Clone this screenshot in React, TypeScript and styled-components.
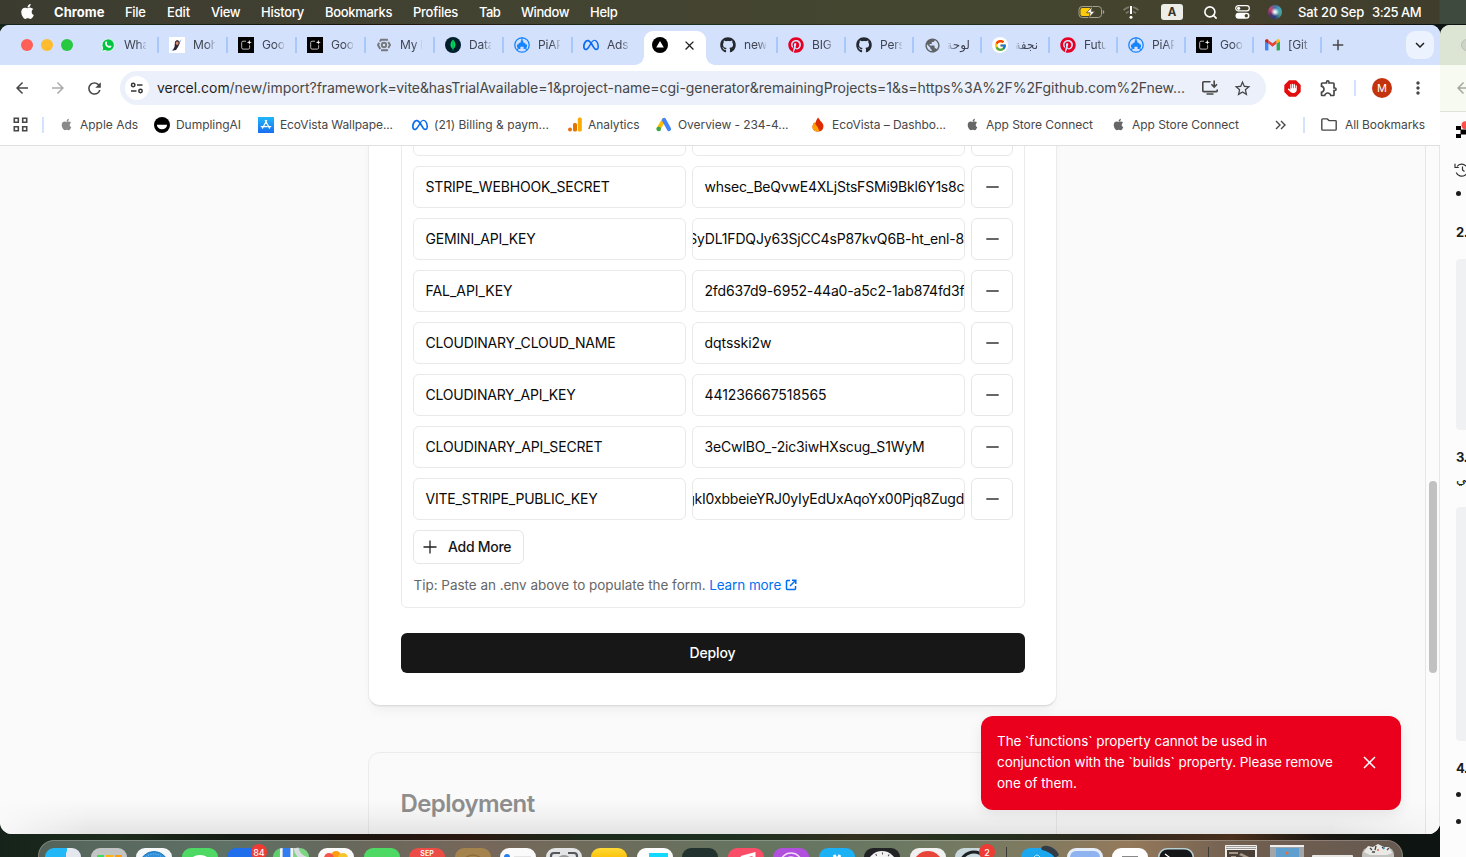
import React from 'react';
import styled, { createGlobalStyle, css } from 'styled-components';
import { FaApple, FaGithub, FaPinterest, FaHand, FaMeta } from 'react-icons/fa6';
import { FcGoogle } from 'react-icons/fc';
import {
  MdArrowBack, MdArrowForward, MdRefresh, MdStarOutline, MdOutlineExtension, MdMoreVert,
  MdPublic, MdKeyboardArrowDown, MdClose, MdAdd,
} from 'react-icons/md';
import { Search } from 'lucide-react';

const Global = createGlobalStyle`
  * { box-sizing: border-box; }
  body { margin: 0; overflow: hidden; font-family: Inter, "DejaVu Sans", sans-serif; }
  svg { display: block; flex: none; }
`;

const Desktop = styled.div`
  position: relative;
  width: 1466px;
  height: 857px;
  overflow: hidden;
  background: linear-gradient(90deg, #16231a 0%, #1d2c1c 8%, #141b14 16%, #1b130e 24%, #2a1810 32%, #1b2a1b 40%, #1d3020 50%, #33301f 58%, #23301e 66%, #2c261c 76%, #4a2f1c 84%, #1b1712 90%, #0e1411 96%);
`;

/* ---------- menu bar ---------- */
const MenuBar = styled.div`
  display: flex;
  align-items: center;
  height: 24px;
  padding: 0 45px 0 19px;
  color: #fff;
  background: linear-gradient(90deg, #3c3b30 0, #434332 500px, #45462f 1000px, #403d2c 1439px, #3d4a3d 1440px);
`;
const AppleMenu = styled.span`
  display: flex;
  flex: none;
  width: 35px;
  padding-bottom: 1px;
`;
const MenuItem = styled.span<{ $w: number; $ls: number; $bold?: boolean }>`
  flex: none;
  width: ${p => p.$w}px;
  padding-bottom: 1px;
  font-size: 13px;
  font-weight: ${p => (p.$bold ? 700 : 500)};
  letter-spacing: ${p => p.$ls}px;
  white-space: nowrap;
`;
const Status = styled.div`
  display: flex;
  align-items: center;
  gap: 16px;
  margin-left: auto;
`;
const Slot = styled.span<{ $w: number }>`
  display: flex;
  flex: none;
  justify-content: center;
  align-items: center;
  width: ${p => p.$w}px;
`;
const InputSource = styled.span`
  width: 22px;
  height: 16px;
  border-radius: 3px;
  background: #eeeee9;
  color: #35352b;
  font: 700 11.5px/16px Inter, sans-serif;
  text-align: center;
`;
const Siri = styled.span`
  width: 14px;
  height: 14px;
  border-radius: 50%;
  background: radial-gradient(circle at 50% 50%, #e8f4f8 0 8%, transparent 42%),
    conic-gradient(#4a6ea8, #3fa7b9, #4f9a90, #23407c, #5a2f6d, #c8436c, #4a6ea8);
`;
const Clock = styled.span`
  display: flex;
`;

/* ---------- browser window ---------- */
const Window = styled.div`
  position: absolute;
  left: 0;
  top: 25px;
  width: 1440px;
  height: 809px;
  display: flex;
  flex-direction: column;
  overflow: hidden;
  border-radius: 9px 9px 12px 12px;
  background: #fff;
`;
const TabStrip = styled.div`
  display: flex;
  align-items: center;
  height: 40px;
  flex: none;
  background: #d3e1fd;
`;
const Lights = styled.div`
  display: flex;
  gap: 8px;
  width: 90px;
  padding-left: 21px;
`;
const Light = styled.span<{ $c: string }>`
  width: 12px;
  height: 12px;
  border-radius: 50%;
  background: ${p => p.$c};
`;
const Tab = styled.div<{ $w: number; $sep?: boolean }>`
  display: flex;
  flex: none;
  align-items: center;
  gap: 8px;
  width: ${p => p.$w}px;
  height: 16px;
  padding-left: 10px;
  border-right: 2px solid ${p => (p.$sep ? '#a8c7fa' : 'transparent')};
`;
const TabIcon = styled.span`
  display: flex;
  flex: none;
  align-items: center;
  justify-content: center;
  width: 16px;
  height: 16px;
`;
const TabLabel = styled.span<{ $rtl?: boolean }>`
  width: 22px;
  overflow: hidden;
  white-space: nowrap;
  font-size: 12px;
  line-height: 16px;
  letter-spacing: ${p => (p.$rtl ? 0 : '-0.2px')};
  color: #3f4450;
  direction: ${p => (p.$rtl ? 'rtl' : 'ltr')};
  mask-image: linear-gradient(${p => (p.$rtl ? 'to left' : 'to right')}, #000 60%, transparent 108%);
`;
const ActiveTab = styled.div`
  position: relative;
  align-self: flex-end;
  display: flex;
  align-items: center;
  gap: 14px;
  width: 62px;
  height: 34px;
  margin: 0 4px 0 2px;
  padding: 0 0 6px 8px;
  border-radius: 9px 9px 0 0;
  background: #fff;
  color: #1f1f1f;
  &::before, &::after {
    content: '';
    position: absolute;
    bottom: 0;
    width: 9px;
    height: 9px;
  }
  &::before { left: -9px; background: radial-gradient(circle at 0 0, transparent 8.5px, #fff 9px); }
  &::after { right: -9px; background: radial-gradient(circle at 100% 0, transparent 8.5px, #fff 9px); }
`;
const TabMenu = styled.div`
  display: flex;
  align-items: center;
  justify-content: center;
  width: 28px;
  height: 28px;
  margin: 0 6px 0 auto;
  border-radius: 9px;
  background: #ecf2fe;
  color: #1f1f1f;
`;
const NewTab = styled.div`
  margin-left: 7px;
  color: #474747;
`;

const Toolbar = styled.div`
  display: flex;
  flex: none;
  align-items: center;
  height: 46px;
  padding-left: 4px;
  background: #fff;
  color: #474747;
`;
const Faded = styled(Slot)`
  color: #ababab;
`;
const Omnibox = styled.div`
  display: flex;
  flex: none;
  align-items: center;
  width: 1146px;
  height: 34px;
  margin: 0 8px;
  padding: 0 8px 0 5px;
  border-radius: 17px;
  background: #ebf0fa;
`;
const SiteInfo = styled.span`
  display: flex;
  align-items: center;
  justify-content: center;
  width: 24px;
  height: 24px;
  border-radius: 50%;
  background: #fff;
`;
const Url = styled.span`
  flex: 1;
  margin-left: 8px;
  padding-bottom: 1px;
  font-size: 14px;
  letter-spacing: -0.043px;
  white-space: nowrap;
  color: #474747;
  b { font-weight: 400; color: #1f1f1f; }
`;
const Divider = styled.span<{ $m: string }>`
  flex: none;
  width: 2px;
  height: 16px;
  margin: ${p => p.$m};
  background: #d3e3fd;
`;
const Avatar = styled.span`
  flex: none;
  width: 20px;
  height: 20px;
  border-radius: 50%;
  background: #c2330e;
  color: #fff;
  font-size: 11px;
  line-height: 20px;
  text-align: center;
`;

const BookmarkBar = styled.div`
  display: flex;
  flex: none;
  align-items: center;
  height: 35px;
  padding: 0 0 7px 12.5px;
  border-bottom: 1px solid #dfe0e2;
  color: #474747;
  font-size: 12px;
`;
const Bookmark = styled.div<{ $w: number; $ls: number; $icon: number }>`
  display: flex;
  flex: none;
  align-items: center;
  width: ${p => p.$w}px;
  letter-spacing: ${p => p.$ls}px;
  white-space: nowrap;
  > :first-child { width: ${p => p.$icon}px; flex: none; display: flex; }
`;

/* ---------- page ---------- */
const Body = styled.div`
  position: relative;
  display: flex;
  flex: 1;
  min-height: 0;
  background: #fafafa;
  &::after {
    content: '';
    position: absolute;
    inset: auto 0 0 0;
    height: 34px;
    background: linear-gradient(rgba(0,0,0,0), rgba(0,0,0,0.035) 50%, rgba(0,0,0,0.09));
    mask-image: linear-gradient(90deg, rgba(0,0,0,.1), #000 90px, #000 1330px, rgba(0,0,0,.15));
  }
`;
const Page = styled.div`
  flex: 1;
  overflow: hidden;
`;
const Scrollbar = styled.div`
  width: 15px;
  padding: 335px 0 0 3px;
  border: solid #e6e6e6;
  border-width: 0 1px;
  background: #fbfbfb;
`;
const Thumb = styled.div`
  width: 8px;
  height: 192px;
  border-radius: 4px;
  background: #c1c1c1;
`;
const Card = styled.section<{ $muted?: boolean }>`
  width: 689px;
  margin: ${p => (p.$muted ? '46px 0 0 368px' : '-60px 0 0 368px')};
  padding: ${p => (p.$muted ? '35px 31.5px 60px' : '15px 31.5px 32px')};
  border: 1px solid #ebebeb;
  border-radius: 12px;
  background: ${p => (p.$muted ? '#fafafa' : '#fff')};
  ${p => !p.$muted && css`
    border-bottom-color: #dcdcdc;
    box-shadow: 0 1px 1px rgba(0,0,0,0.04), 0 8px 12px -4px rgba(0,0,0,0.05);
  `}
`;
const Panel = styled.div`
  width: 624px;
  padding: 11px 11.5px 12px;
  border: 1px solid #ebebeb;
  border-radius: 6px;
`;
const EnvList = styled.div`
  display: flex;
  flex-direction: column;
  gap: 10px;
`;
const EnvRow = styled.div`
  display: grid;
  grid-template-columns: 273px 273px 42px;
  gap: 6px;
`;
const Field = styled.div<{ $ls?: number; $end?: boolean }>`
  display: flex;
  align-items: center;
  height: 42px;
  padding: 0 0 1px ${p => (p.$end ? 0 : 11.5)}px;
  justify-content: ${p => (p.$end ? 'flex-end' : 'flex-start')};
  overflow: hidden;
  border: 1px solid #e9e9e9;
  border-radius: 6px;
  background: #fff;
  color: #0a0a0a;
  font-size: 14px;
  letter-spacing: ${p => p.$ls ?? 0}px;
  white-space: nowrap;
`;
const RemoveButton = styled.button`
  display: flex;
  align-items: center;
  justify-content: center;
  height: 42px;
  padding: 0;
  border: 1px solid #e6e6e6;
  border-radius: 6px;
  background: #fff;
`;
const AddButton = styled.button`
  display: flex;
  align-items: center;
  gap: 11px;
  width: 111px;
  height: 34px;
  margin-top: 10px;
  padding: 0 0 1px 9px;
  border: 1px solid #e6e6e6;
  border-radius: 6px;
  background: #fff;
  color: #171717;
  font: 500 14px Inter, sans-serif;
  letter-spacing: -0.28px;
  white-space: nowrap;
`;
const Tip = styled.p`
  display: flex;
  align-items: center;
  height: 20px;
  margin: 11px 0 0 0.5px;
  padding-bottom: 1px;
  color: #666;
  font-size: 13.5px;
  letter-spacing: -0.03px;
  white-space: nowrap;
`;
const Learn = styled.a`
  display: flex;
  align-items: center;
  gap: 4px;
  margin-left: 3.5px;
  color: #0070f3;
  letter-spacing: -0.09px;
`;
const Deploy = styled.button`
  display: block;
  width: 624px;
  height: 40px;
  margin-top: 25px;
  padding: 0 0 2px;
  border: 0;
  border-radius: 6px;
  background: #171717;
  color: #fff;
  font: 500 14px Inter, sans-serif;
  letter-spacing: -0.12px;
`;
const Title = styled.h2`
  margin: 0;
  color: #8f8f8f;
  font-size: 24px;
  font-weight: 600;
  line-height: 32px;
  letter-spacing: -0.6px;
`;
const Toast = styled.div`
  position: absolute;
  z-index: 1;
  left: 981px;
  top: 570px;
  display: flex;
  align-items: center;
  justify-content: space-between;
  width: 420px;
  height: 94px;
  padding: 0 21px 1px 16px;
  border-radius: 12px;
  background: #ea001d;
  box-shadow: 0 4px 14px rgba(0,0,0,0.08);
  color: #fff;
  font-size: 13.5px;
  line-height: 21px;
  letter-spacing: -0.07px;
  white-space: nowrap;
`;

/* ---------- window behind, at the right ---------- */
const SideWindow = styled.div`
  position: absolute;
  left: 1440px;
  top: 25px;
  width: 26px;
  height: 832px;
  overflow: hidden;
  border-radius: 10px 0 0 0;
  background: #fcfcfc;
`;
const SideTabs = styled.div`
  display: flex;
  align-items: center;
  height: 40px;
  padding-left: 21px;
  background: #dce5d4;
`;
const SideLight = styled.span`
  flex: none;
  width: 12px;
  height: 12px;
  border: 1px solid #b9c0b3;
  border-radius: 50%;
  background: #cdd4c7;
`;
const SideBar = styled.div`
  display: flex;
  align-items: center;
  height: 47px;
  padding-left: 14px;
  border-bottom: 1px solid #dfe3da;
  background: #f7faf0;
  color: #a5a8a0;
`;
const SideBody = styled.div`
  display: flex;
  flex-direction: column;
  padding-left: 16px;
  white-space: nowrap;
`;
const SideLogo = styled.span`
  margin-top: 13px;
`;
const SideHistory = styled.span`
  margin: 24px 0 0 -2px;
`;
const SideNumber = styled.span<{ $mt: number }>`
  margin-top: ${p => p.$mt}px;
  color: #1b1c1d;
  font: 700 13px/20px Inter, sans-serif;
  letter-spacing: -0.5px;
`;
const Bullet = styled.span<{ $mt: number }>`
  width: 5px;
  height: 5px;
  margin-top: ${p => p.$mt}px;
  border-radius: 50%;
  background: #1b1c1d;
`;
const CodeBlock = styled.div<{ $mt: number; $h: number }>`
  height: ${p => p.$h}px;
  margin-top: ${p => p.$mt}px;
  border-radius: 4px 0 0 4px;
  background: #f0f1f3;
`;
const Arabic = styled.span`
  height: 20px;
  margin-top: 2px;
  color: #1b1c1d;
  font: 500 13px/20px "DejaVu Sans", sans-serif;
`;

/* ---------- dock ---------- */
const Dock = styled.div`
  position: absolute;
  left: 38px;
  top: 840px;
  width: 1365px;
  height: 62px;
  display: flex;
  gap: 9.5px;
  padding: 7px 0 0 6px;
  border: 1px solid rgba(255,255,255,0.22);
  border-radius: 16px;
  background: linear-gradient(90deg, #55645a 0%, #5f7065 14%, #67685c 22%, #76675a 32%, #6d6c5b 42%, #64745f 52%, #6a7862 62%, #7d7a60 72%, #94795b 80%, #715f50 88%, #665950 100%);
`;
const DockSlot = styled.div<{ $bg: string; $w?: number; $r?: number; $mt?: number; $ml?: number }>`
  position: relative;
  flex: none;
  display: flex;
  justify-content: center;
  width: ${p => p.$w ?? 36}px;
  height: 36px;
  margin-top: ${p => p.$mt ?? 0}px;
  margin-left: ${p => p.$ml ?? 0}px;
  border-radius: ${p => p.$r ?? 9}px;
  background: ${p => p.$bg};
  color: #fff;
  font-size: 7px;
  line-height: 12px;
  font-weight: 600;
  svg { overflow: visible; }
`;
const DockLine = styled.span`
  flex: none;
  width: 1px;
  height: 40px;
  margin: -1px 5px 0;
  background: #3d3b35;
`;
const Badge = styled.span`
  position: absolute;
  right: -4px;
  top: -4px;
  width: 16px;
  height: 16px;
  border-radius: 50%;
  background: #ee3b34;
  font-size: 9px;
  line-height: 17px;
  font-weight: 500;
  text-align: center;
`;

/* ---------- glyphs ---------- */
const WhatsApp = () => (
  <svg width="14" height="14" viewBox="0 0 14 14">
    <path d="M.8 13.3 1.7 10A6.2 6.2 0 1 1 4 12.4z" fill="#00c543" stroke="#fff" strokeWidth=".8" />
    <path d="M4.6 3.7c.6-.6 1-.3 1.2.2l.4 1c0 .4-.6.8-.5 1 .5 1 1.3 1.7 2.3 2.2.3 0 .6-.7 1-.7l1.3.6c.3.3 0 1.3-.8 1.6-1.5.7-3.3-.5-4.400-1.700C4 6.700 3.500 4.800 4.600 3.700z" fill="#fff" />
  </svg>
);
const Rocket = () => (
  <svg width="16" height="16" viewBox="0 0 16 16">
    <rect width="16" height="16" fill="#fff" />
    <path d="M12.800 2 9.500 8l-3 4.500L2.500 14l3-3.500z" fill="#4779d8" />
    <path d="M6 4.500 8 3l2.200 1 .3 3L9 10l-2 3-3 .5L5.500 10z" fill="#2d2733" />
    <path d="M6.800 4.800h2.700v2.400L8 8.300 6.800 7z" fill="#d98b78" />
  </svg>
);
const Sparkle = () => (
  <svg width="16" height="16" viewBox="0 0 16 16">
    <rect width="16" height="16" fill="#000" />
    <path d="M8 4.200H5A1.300 1.300 0 0 0 3.700 5.500v5.300A1.300 1.300 0 0 0 5 12.100h5.300a1.300 1.300 0 0 0 1.300-1.300V8.300" fill="none" stroke="#ccc" strokeWidth=".9" />
    <path d="m11.300 2.800.6 1.900 1.900.6-1.900.6-.6 1.900-.6-1.900-1.900-.6 1.900-.6z" fill="#fff" />
  </svg>
);
const Hexagon = () => (
  <svg width="14" height="14" viewBox="0 0 14 14" fill="none" stroke="#77787c" strokeWidth="1.9">
    <path d="M4 1.800h6L13 7l-3 5.200H4L1 7z" strokeDasharray="7 1.5" />
    <circle cx="7" cy="7" r="2.200" />
  </svg>
);
const Leaf = () => (
  <svg width="16" height="16" viewBox="0 0 16 16">
    <circle cx="8" cy="8" r="8" fill="#001e2b" />
    <path d="M8 2.500c3.300 3.500 3.300 7 .3 9.500v1.500h-.6V12C4.700 9.500 4.700 6 8 2.500z" fill="#00d95f" />
    <path d="M8 3v9" stroke="#009e4a" strokeWidth=".8" />
  </svg>
);
const Robot = () => (
  <svg width="16" height="16" viewBox="0 0 16 16">
    <circle cx="8" cy="8" r="7.200" fill="none" stroke="#1684fb" strokeWidth="1.300" />
    <path d="M8 0v4M3.500 13l1.200-3M12.500 13l-1.200-3" stroke="#1684fb" strokeWidth="1.100" />
    <path d="M6.800 3.500h2.400v1.800l2.300 1.200v1H13v3h-1.500V12H9.600V9.800H6.400V12H4.500v-1.500H3v-3h1.500v-1l2.300-1.200z" fill="#1684fb" />
  </svg>
);
const Gmail = () => (
  <svg width="15" height="12" viewBox="0 0 15 12">
    <path d="M0 2v8.500a1 1 0 0 0 1 1h2.400V4z" fill="#4285f4" />
    <path d="M15 2v8.500a1 1 0 0 1-1 1h-2.400V4z" fill="#34a853" />
    <path d="M3.400 4.500V1.200L7.500 4.300l4.100-3.100v3.300L7.500 7.700z" fill="#ea4335" />
    <path d="M0 2c0-1.700 1.800-2.300 3-1.400l.4.3v3.900L0 2.500z" fill="#c5221f" />
    <path d="M15 2c0-1.700-1.800-2.300-3-1.400l-.4.3v3.900L15 2.500z" fill="#fbbc04" />
  </svg>
);
const GoogleBadge = styled.span`
  display: flex;
  align-items: center;
  justify-content: center;
  flex: none;
  width: 16px;
  height: 16px;
  border-radius: 50%;
  background: #fff;
`;
const Vercel = () => (
  <svg width="16" height="16" viewBox="0 0 16 16">
    <circle cx="8" cy="8" r="8" /><path d="m8 4 3.800 6.600H4.200z" fill="#fff" />
  </svg>
);
const Tune = () => (
  <svg width="14" height="12" viewBox="0 0 14 12" fill="none" stroke="#333" strokeWidth="1.5">
    <circle cx="3.200" cy="3" r="1.700" /><path d="M7 3h5.500M1 9h5.500" /><circle cx="10.500" cy="9" r="1.700" />
  </svg>
);
const Install = () => (
  <svg width="18" height="16" viewBox="0 0 18 16" fill="none" stroke="#474747" strokeWidth="1.6">
    <path d="M9.500 1.800H2.600a.8.8 0 0 0-.8.8v8.200c0 .4.4.8.8.8h12.800c.4 0 .8-.4.8-.8V9.500M5.500 14h7M13.200.5v6.500m-2.800-2.700 2.800 2.800L16 4.300" />
  </svg>
);
const Grid4 = () => (
  <svg width="15" height="15" viewBox="0 0 15 15" fill="none" stroke="#474747" strokeWidth="1.6">
    <path d="M1.300 1.300h4v4h-4zM9.700 1.300h4v4h-4zM1.300 9.700h4v4h-4zM9.700 9.700h4v4h-4z" />
  </svg>
);
const Dumpling = () => (
  <svg width="16" height="16" viewBox="0 0 16 16">
    <circle cx="8" cy="8" r="8" /><path d="M2.900 7.700h10.200a5.100 4.600 0 0 1-10.200 0z" fill="#fff" />
  </svg>
);
const AppStore = () => (
  <svg width="16" height="16" viewBox="0 0 16 16">
    <defs><linearGradient id="as" x2="0" y2="1"><stop stopColor="#1fb8f8" /><stop offset="1" stopColor="#1a6df0" /></linearGradient></defs>
    <rect width="16" height="16" fill="url(#as)" />
    <path d="m8.700 3.500-4.200 7.600M7.300 3.500l4.200 7.600M3.200 9.600h6M11 9.600h1.800" stroke="#fff" strokeWidth="1.200" strokeLinecap="round" />
  </svg>
);
const Bars = () => (
  <svg width="14" height="15" viewBox="0 0 14 15">
    <rect x="9.800" y="0.500" width="4" height="14" rx="1.500" fill="#f9ab00" />
    <rect x="5" y="6" width="4" height="8.500" rx="1.500" fill="#e37400" /><circle cx="2" cy="12.500" r="2" fill="#e8710a" />
  </svg>
);
const AdsLogo = () => (
  <svg width="16" height="15" viewBox="0 0 16 15" strokeWidth="4.200" strokeLinecap="round">
    <path d="m7.500 3.500-4.800 8" stroke="#fbbc04" /><path d="m8 3 5 9" stroke="#4285f4" /><circle cx="2.700" cy="12" r="2.300" fill="#34a853" />
  </svg>
);
const Flame = () => (
  <svg width="12" height="15" viewBox="0 0 12 15">
    <path d="M6 .5c2 2 2 3.500 3 4 1.800 1.700 2.700 3.500 2.400 5.500C11 13 9 14.500 6 14.500 2.500 14.500.5 12.500.5 10c0-2 1-3.500 1.800-4.500l1 1C3.800 4.500 4.500 2.500 6 .5z" fill="#dd2c00" />
    <path d="M.5 10c0-2 1-3.500 1.800-4.500C4 8 6.500 10.500 7.500 14.200 3.500 15.200.5 13 .5 10z" fill="#ffa000" />
  </svg>
);
const Folder = () => (
  <svg width="16" height="13" viewBox="0 0 16 13" fill="none" stroke="#474747" strokeWidth="1.4">
    <path d="M.8 1.800v9.400c0 .5.4.9.9.9h12.600c.5 0 .9-.4.9-.9V3.500c0-.5-.4-.9-.9-.9H8L6.300.9H1.700c-.5 0-.9.4-.9.9z" />
  </svg>
);
const Battery = () => (
  <svg width="27" height="14" viewBox="0 0 27 14">
    <rect x="1" y="1.500" width="22.500" height="11" rx="3.200" fill="none" stroke="#a2a193" strokeWidth="1" />
    <rect x="2.500" y="3" width="11" height="8" rx="1.800" fill="#fecb09" />
    <path d="M24.800 5v4q1.500-.6 1.500-2t-1.500-2z" fill="#a2a193" />
    <path d="m14.500 1.500-6 6.300h3.700L10.700 12.800l6.300-6.500h-3.800z" fill="#fff" stroke="#45442f" strokeWidth=".8" />
  </svg>
);
const Wifi = () => (
  <svg width="18" height="15" viewBox="0 0 18 15" fill="none" strokeWidth="1.8">
    <path d="M1.500 5.200Q4 2.800 7 2.200M16.500 5.200Q14 2.800 11 2.200M4 8.200Q5.500 6.900 7 6.500M14 8.200q-1.500-1.300-3-1.700" stroke="#7d7c6f" />
    <path d="M9 1v8" stroke="#fff" strokeWidth="2" /><circle cx="9" cy="12.200" r="1.500" fill="#fff" />
  </svg>
);
const Control = () => (
  <svg width="15" height="14" viewBox="0 0 15 14">
    <rect x=".7" y=".7" width="13.600" height="5.200" rx="2.600" fill="none" stroke="#fff" strokeWidth="1.200" /><circle cx="3.600" cy="3.300" r="1.600" fill="#fff" />
    <rect x=".5" y="7.700" width="14" height="6" rx="3" fill="#fff" /><circle cx="11.300" cy="10.700" r="1.700" fill="#45442f" />
  </svg>
);
const AdBlock = () => (
  <svg width="17" height="17" viewBox="0 0 17 17">
    <path d="M5 .3h7L16.700 5v7L12 16.700H5L.3 12V5z" fill="#e40d0d" />
    <g transform="translate(3.900 3.500) scale(.0185)"><FaHand size={512} color="#fff" /></g>
  </svg>
);
const Minus = () => (
  <svg width="13" height="2" viewBox="0 0 13 2"><path d="M.3 1h12.400" stroke="#333" strokeWidth="1.500" /></svg>
);
const Plus = () => (
  <svg width="14" height="14" viewBox="0 0 14 14"><path d="M.5 7h13M7 .5v13" stroke="#222" strokeWidth="1.300" /></svg>
);
const External = () => (
  <svg width="12" height="12" viewBox="0 0 12 12" fill="none" stroke="#0070f3" strokeWidth="1.500">
    <path d="M5 1.500H2.200a.7.7 0 0 0-.7.7v7.600c0 .4.3.7.7.7h7.600c.4 0 .7-.3.7-.7V7M7 1.200h3.800V5M5 7l5.500-5.500" />
  </svg>
);
const Cross = () => (
  <svg width="13" height="13" viewBox="0 0 13 13"><path d="m1 1 11 11M12 1 1 12" stroke="#fff" strokeWidth="1.500" /></svg>
);
const PixelLogo = () => (
  <svg width="10" height="14" viewBox="0 0 10 14" overflow="visible">
    <path d="M0 1h5v4H0zM4.500 4.500H10v5H4.500zM0 9h5v4H0z" /><circle cx="9.500" cy="0.300" r="4" fill="#f9504a" />
  </svg>
);
const History = () => (
  <svg width="15" height="14" viewBox="0 0 15 14" fill="none" stroke="#333" strokeWidth="1.200">
    <path d="M3 3.500a6 6 0 1 1-.8 6M1 .8v3.700h3.800M8.500 3.500V7l2 1.500" />
  </svg>
);
const Chevrons = () => (
  <svg width="11" height="10" viewBox="0 0 11 10" fill="none" stroke="#474747" strokeWidth="1.4"><path d="m1 1 4 4-4 4M6 1l4 4-4 4" /></svg>
);

const menu: [string, number, number, boolean?][] = [
  ['Chrome', 71, 0.04, true], ['File', 42, -0.33], ['Edit', 44, -0.14], ['View', 50, -0.42], ['History', 64, -0.26],
  ['Bookmarks', 88, -0.32], ['Profiles', 66, -0.26], ['Tab', 42, -0.6], ['Window', 69, -0.43], ['Help', 30, -0.28],
];

type TabInfo = { icon: React.ReactNode; text: string; rtl?: boolean };
const leftTabs: TabInfo[] = [
  { icon: <WhatsApp />, text: 'WhatsApp' }, { icon: <Rocket />, text: 'Mohamed' }, { icon: <Sparkle />, text: 'Google' },
  { icon: <Sparkle />, text: 'Google' }, { icon: <Hexagon />, text: 'My Pro' }, { icon: <Leaf />, text: 'Data' },
  { icon: <Robot />, text: 'PiAPI' }, { icon: <FaMeta size={16} color="#0a6cf0" />, text: 'Ads' },
];
const rightTabs: TabInfo[] = [
  { icon: <FaGithub size={16} color="#24292f" />, text: 'new' }, { icon: <FaPinterest size={16} color="#e60023" />, text: 'BIG' },
  { icon: <FaGithub size={16} color="#24292f" />, text: 'Pers' }, { icon: <MdPublic size={17} color="#5f6368" />, text: 'لوحة', rtl: true },
  { icon: <GoogleBadge><FcGoogle size={13} /></GoogleBadge>, text: 'نجفة', rtl: true }, { icon: <FaPinterest size={16} color="#e60023" />, text: 'Futu' },
  { icon: <Robot />, text: 'PiAPI' }, { icon: <Sparkle />, text: 'Google' }, { icon: <Gmail />, text: '[Git' },
];

const bookmarks: [React.ReactNode, string, number, number, number][] = [
  [<FaApple size={13} color="#8a8a8a" />, 'Apple Ads', 94, 20, -0.02],
  [<Dumpling />, 'DumplingAI', 104, 22, -0.04],
  [<AppStore />, 'EcoVista Wallpape...', 154, 22, -0.1],
  [<FaMeta size={16} color="#0a6cf0" />, '(21) Billing & paym...', 156, 22, 0.03],
  [<Bars />, 'Analytics', 88, 20, -0.05],
  [<AdsLogo />, 'Overview - 234-4...', 156, 22, -0.06],
  [<Flame />, 'EcoVista – Dashbo...', 154, 20, -0.07],
  [<FaApple size={13} color="#666" />, 'App Store Connect', 146, 20, -0.04],
  [<FaApple size={13} color="#666" />, 'App Store Connect', 163, 20, -0.04],
];

const env: { k: string; ls: number; v: string; vls: number; end?: boolean }[] = [
  { k: '', ls: 0, v: '', vls: 0 },
  { k: 'STRIPE_WEBHOOK_SECRET', ls: -0.171, v: 'whsec_BeQvwE4XLjStsFSMi9Bkl6Y1s8c', vls: -0.211 },
  { k: 'GEMINI_API_KEY', ls: -0.179, v: 'SyDL1FDQJy63SjCC4sP87kvQ6B-ht_enl-8', vls: -0.17, end: true },
  { k: 'FAL_API_KEY', ls: -0.045, v: '2fd637d9-6952-44a0-a5c2-1ab874fd3f', vls: -0.166 },
  { k: 'CLOUDINARY_CLOUD_NAME', ls: -0.166, v: 'dqtsski2w', vls: -0.05 },
  { k: 'CLOUDINARY_API_KEY', ls: -0.225, v: '441236667518565', vls: -0.073 },
  { k: 'CLOUDINARY_API_SECRET', ls: -0.159, v: '3eCwIBO_-2ic3iwHXscug_S1WyM', vls: -0.185 },
  { k: 'VITE_STRIPE_PUBLIC_KEY', ls: -0.196, v: 'gkI0xbbeieYRJ0yIyEdUxAqoYx00Pjq8Zugd', vls: -0.235, end: true },
];

const TabItem = ({ t, w, sep }: { t: TabInfo; w: number; sep: boolean }) => (
  <Tab $w={w} $sep={sep}>
    <TabIcon>{t.icon}</TabIcon>
    <TabLabel $rtl={t.rtl}>{t.text}</TabLabel>
  </Tab>
);

const DockIcons = () => (
  <Dock>
    <DockSlot $bg="linear-gradient(100deg, #22b8f8 52%, #e4e7ee 53%)" />
    <DockSlot $bg="#c3c5c4"><svg width="36" height="20"><path d="M6 7h7v6H6z" fill="#3edb5b" /><path d="M15 7h7v6h-7z" fill="#ffb414" /><path d="M24 7h7v6h-7z" fill="#ff9c10" /></svg></DockSlot>
    <DockSlot $bg="#f5f7f8"><svg width="36" height="36"><circle cx="18" cy="18" r="14.500" fill="#2f8fdb" stroke="#1e78bd" /><circle cx="18" cy="18" r="12" fill="none" stroke="#8cc6f0" strokeDasharray="1 1.500" /></svg></DockSlot>
    <DockSlot $bg="#4ed964"><svg width="36" height="36"><ellipse cx="18" cy="17" rx="12" ry="10" fill="#fff" /></svg></DockSlot>
    <DockSlot $bg="#1f6fec"><Badge>84</Badge></DockSlot>
    <DockSlot $bg="linear-gradient(90deg, #5fcf6c 0 18%, #f4f4ee 19% 26%, #2f7df0 27% 48%, #f4f4ee 49% 56%, #7bd582 57%)"><svg width="36" height="36"><path d="M23 0q2 10 13 12" fill="none" stroke="#dadce2" strokeWidth="5" /></svg></DockSlot>
    <DockSlot $bg="#fafafa"><svg width="36" height="20"><circle cx="18" cy="8" r="5" fill="#ff9d12" /><circle cx="11" cy="10" r="5" fill="#f3564d" /><circle cx="25" cy="10" r="5" fill="#f5c52b" /></svg></DockSlot>
    <DockSlot $bg="#4ed964" />
    <DockSlot $bg="#ec4c46">SEP</DockSlot>
    <DockSlot $bg="#a5834c"><svg width="36" height="36"><circle cx="18" cy="18" r="11" fill="none" stroke="#8d6d3b" strokeWidth="1.500" /></svg></DockSlot>
    <DockSlot $bg="#fafafa"><svg width="36" height="36"><circle cx="7" cy="9" r="3" fill="#2a7df0" /><path d="M14 9h17" stroke="#ddd" strokeWidth="1.500" /></svg></DockSlot>
    <DockSlot $bg="#e3e4e6"><svg width="36" height="36" fill="none" stroke="#55575b" strokeWidth="2.200"><path d="M5 12V8q0-3 3-3h6M22 5h6q3 0 3 3v4" /><circle cx="18" cy="15" r="7" stroke="#999" /></svg></DockSlot>
    <DockSlot $bg="linear-gradient(#ffda35, #fbc40d 9px)" />
    <DockSlot $bg="#fdfdfd"><svg width="36" height="20"><path d="M12 5h19v15H12z" fill="#14d9ff" /></svg></DockSlot>
    <DockSlot $bg="#22332f" />
    <DockSlot $bg="#fa4d67"><svg width="36" height="20"><path d="M13 9.500 26 6v8" fill="none" stroke="#fff" strokeWidth="3" /></svg></DockSlot>
    <DockSlot $bg="#b050dd"><svg width="36" height="36" fill="none" stroke="#f2dcfb" strokeWidth="1.500"><circle cx="18" cy="16" r="11" /><circle cx="18" cy="16" r="7" /></svg></DockSlot>
    <DockSlot $bg="#1cb0f4"><svg width="36" height="20"><path d="m15 7 3 5 3-5" fill="none" stroke="#fff" strokeWidth="3" /></svg></DockSlot>
    <DockSlot $bg="#222325"><svg width="36" height="36"><circle cx="18" cy="18" r="15" fill="#f2f2f2" /><circle cx="18" cy="18" r="12.500" fill="none" stroke="#444" strokeWidth="2" strokeDasharray="1 5.500" /></svg></DockSlot>
    <DockSlot $bg="#f1f1f1"><svg width="36" height="36"><circle cx="18" cy="18" r="15" fill="#e8453a" /></svg></DockSlot>
    <DockSlot $bg="#c9d8dd"><svg width="36" height="36" fill="none" stroke="#1d2023" strokeWidth="3"><circle cx="19" cy="18" r="14" /><path d="M12 16q6-8 14-2" /></svg><Badge>2</Badge></DockSlot>
    <DockLine />
    <DockSlot $bg="#1ba7ee"><svg width="36" height="36"><path d="M20 0q2-3 7-2 8 2 11 9l-4 3q-4-6-13-8z" fill="#333c46" /><path d="M13 9q3-4 6 0t6 0" fill="none" stroke="#bfe9ff" /></svg></DockSlot>
    <DockSlot $bg="#e6eefa"><svg width="36" height="20"><rect x="3" y="3" width="30" height="20" rx="6" fill="#8fb2f0" /></svg></DockSlot>
    <DockSlot $bg="#fff"><svg width="36" height="20"><path d="M10 9h16" stroke="#888" strokeWidth="2" /></svg></DockSlot>
    <DockSlot $bg="#b8d0d4"><svg width="36" height="20"><rect x="1.500" y="1.500" width="33" height="30" rx="8" fill="#151719" /><path d="m7 6 4 3-4 3" fill="none" stroke="#fff" strokeWidth="1.300" /></svg></DockSlot>
    <DockLine />
    <DockSlot $bg="#f1efec" $w={32} $r={1} $mt={-3} $ml={1}><svg width="32" height="20"><path d="M1 1.500h30M1 3.500h30" stroke="#777" strokeWidth=".7" /><path d="M2 5h28v14H2z" fill="#4b4038" /><path d="M4 7h9v2H4zM16 8l10 5h-5l-7-3zM6 11h5v2H6z" fill="#a59686" /></svg></DockSlot>
    <DockSlot $bg="#a3a6a8" $w={34} $r={1} $mt={-3} $ml={4}><svg width="34" height="20"><path d="M0 0h34v2H0z" fill="#eee" /><path d="M6 3h23v17H6z" fill="#5f9fd0" /><circle cx="17" cy="8" r="1.500" fill="#e8742c" /></svg></DockSlot>
    <DockSlot $bg="#e9e7e3" $w={41} $r={1} $mt={7} $ml={-2} />
    <DockSlot $bg="#c4c3bf" $w={32} $r={8} $mt={-1}><svg width="32" height="20"><path d="m2 5 4-6 5 1 5-3 6 3 5 0 3 6-5 2H8z" fill="#e9e9e6" /><path d="m8 1 2 2M14-1l-1 4M20 0l2 2M25 3l2-2M10 5h3" stroke="#444" strokeWidth="1.300" /><circle cx="16" cy="3" r="1" fill="#e26a4c" /><circle cx="22" cy="1" r="1" fill="#409ad8" /></svg></DockSlot>
  </Dock>
);

export default function App() {
  return (
    <Desktop>
      <Global />
      <MenuBar>
        <AppleMenu><FaApple size={17} /></AppleMenu>
        {menu.map(([t, w, ls, b]) => <MenuItem key={t} $w={w} $ls={ls} $bold={b}>{t}</MenuItem>)}
        <Status>
          <Slot $w={27}><Battery /></Slot>
          <Slot $w={20}><Wifi /></Slot>
          <Slot $w={30}><InputSource>A</InputSource></Slot>
          <Slot $w={14}><Search size={15} strokeWidth={2.6} /></Slot>
          <Slot $w={19}><Control /></Slot>
          <Siri />
          <Clock><MenuItem $w={74} $ls={-0.16}>Sat 20 Sep</MenuItem><MenuItem $w={49} $ls={-0.5}>3:25 AM</MenuItem></Clock>
        </Status>
      </MenuBar>

      <SideWindow>
        <SideTabs><SideLight /></SideTabs>
        <SideBar><MdArrowBack size={18} /></SideBar>
        <SideBody>
          <SideLogo><PixelLogo /></SideLogo>
          <SideHistory><History /></SideHistory>
          <Bullet $mt={14} />
          <SideNumber $mt={26}>2.</SideNumber>
          <CodeBlock $mt={17} $h={171} />
          <SideNumber $mt={17}>3.</SideNumber>
          <Arabic>سي</Arabic>
          <CodeBlock $mt={18} $h={234} />
          <SideNumber $mt={17}>4.</SideNumber>
          <Bullet $mt={14} />
          <Bullet $mt={22} />
        </SideBody>
      </SideWindow>

      <Window>
        <TabStrip>
          <Lights><Light $c="#ff5f57" /><Light $c="#febc2e" /><Light $c="#28c840" /></Lights>
          {leftTabs.map((t, i) => <TabItem key={i} t={t} w={69} sep={i < 7} />)}
          <ActiveTab><Vercel /><MdClose size={15} /></ActiveTab>
          {rightTabs.map((t, i) => <TabItem key={i} t={t} w={68} sep />)}
          <NewTab><MdAdd size={18} /></NewTab>
          <TabMenu><MdKeyboardArrowDown size={18} /></TabMenu>
        </TabStrip>
        <Toolbar>
          <Slot $w={36}><MdArrowBack size={18} /></Slot>
          <Faded $w={36}><MdArrowForward size={18} /></Faded>
          <Slot $w={36}><MdRefresh size={19} /></Slot>
          <Omnibox>
            <SiteInfo><Tune /></SiteInfo>
            <Url><b>vercel.com</b>/new/import?framework=vite&amp;hasTrialAvailable=1&amp;project-name=cgi-generator&amp;remainingProjects=1&amp;s=https%3A%2F%2Fgithub.com%2Fnew...</Url>
            <Slot $w={32}><Install /></Slot>
            <Slot $w={32}><MdStarOutline size={19} /></Slot>
          </Omnibox>
          <Slot $w={36}><AdBlock /></Slot>
          <Slot $w={38}><MdOutlineExtension size={20} /></Slot>
          <Divider $m="0 16px 0 6px" />
          <Avatar>M</Avatar>
          <Slot $w={52}><MdMoreVert size={20} /></Slot>
        </Toolbar>
        <BookmarkBar>
          <Grid4 />
          <Divider $m="0 16px 0 14.5px" />
          {bookmarks.map(([icon, text, w, iw, ls], i) => (
            <Bookmark key={i} $w={w} $icon={iw} $ls={ls}><span>{icon}</span>{text}</Bookmark>
          ))}
          <Chevrons />
          <Divider $m="0 16px 0 17px" />
          <Bookmark $w={110} $icon={24} $ls={-0.09}><span><Folder /></span>All Bookmarks</Bookmark>
        </BookmarkBar>
        <Body>
          <Page>
            <Card>
              <Panel>
                <EnvList>
                  {env.map((e, i) => (
                    <EnvRow key={i}>
                      <Field $ls={e.ls}>{e.k}</Field>
                      <Field $ls={e.vls} $end={e.end}>{e.v}</Field>
                      <RemoveButton><Minus /></RemoveButton>
                    </EnvRow>
                  ))}
                </EnvList>
                <AddButton><Plus />Add More</AddButton>
                <Tip>Tip: Paste an .env above to populate the form.<Learn>Learn more<External /></Learn></Tip>
              </Panel>
              <Deploy>Deploy</Deploy>
            </Card>
            <Card $muted><Title>Deployment</Title></Card>
          </Page>
          <Scrollbar><Thumb /></Scrollbar>
          <Toast>
            <span>The `functions` property cannot be used in<br />conjunction with the `builds` property. Please remove<br />one of them.</span>
            <Slot $w={22}><Cross /></Slot>
          </Toast>
        </Body>
      </Window>
      <DockIcons />
    </Desktop>
  );
}
